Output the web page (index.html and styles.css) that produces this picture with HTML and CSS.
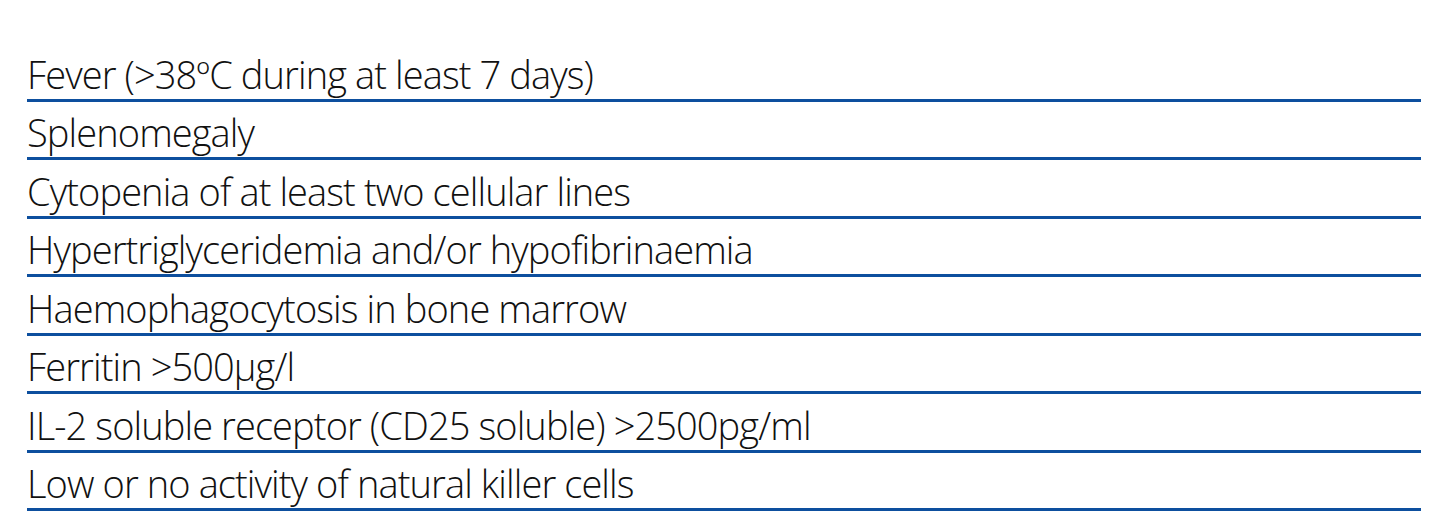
FILE: index.html
```html
<!DOCTYPE html>
<html>
<head>
<meta charset="utf-8">
<link rel="stylesheet" href="styles.css">
</head>
<body>
<div class="criteria">
  <div class="row">Fever (&gt;38ºC during at least 7 days)</div>
  <div class="row">Splenomegaly</div>
  <div class="row">Cytopenia of at least two cellular lines</div>
  <div class="row">Hypertriglyceridemia and/or hypofibrinaemia</div>
  <div class="row">Haemophagocytosis in bone marrow</div>
  <div class="row">Ferritin &gt;500μg/l</div>
  <div class="row">IL-2 soluble receptor (CD25 soluble) &gt;2500pg/ml</div>
  <div class="row">Low or no activity of natural killer cells</div>
</div>
</body>
</html>
```
FILE: styles.css
```css
html, body {
  margin: 0;
  padding: 0;
  background: #ffffff;
}
.criteria {
  margin: 43.6px 0 0 27px;
  width: 1394px;
  display: flex;
  flex-direction: column;
}
.row {
  box-sizing: border-box;
  height: 58.43px;
  border-bottom: 3px solid #0d4f9e;
  display: flex;
  align-items: flex-end;
  padding-bottom: 1px;
  font-family: "Open Sans", sans-serif;
  font-weight: 300;
  font-size: 38px;
  letter-spacing: -0.9px;
  line-height: 48px;
  color: #111111;
  white-space: nowrap;
}
```
